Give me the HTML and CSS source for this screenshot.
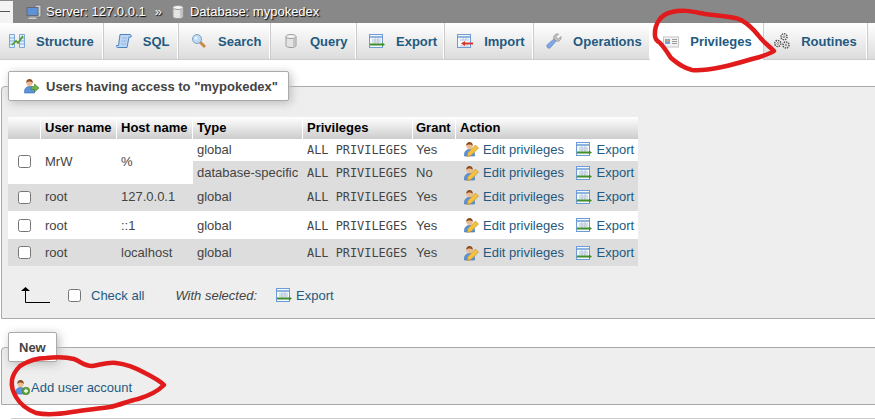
FILE: index.html
```html
<!DOCTYPE html>
<html>
   <head>
      <meta charset="utf-8">
      <title>mypokedex privileges</title>
      <link rel="stylesheet" href="styles.css">
   </head>
   <body>
      <!-- shared icons -->
      <svg class="defs" width="0" height="0">
         <symbol id="i-server" viewBox="0 0 16 16">
            <rect x="9" y="1" width="6" height="12" fill="#c9ced2" stroke="#777"/>
            <rect x="11" y="9" width="2" height="1" fill="#4a4"/>
            <rect x="1" y="3.5" width="11" height="8" fill="#5b93d6" stroke="#667"/>
            <rect x="4" y="12" width="5" height="1.5" fill="#999"/>
            <rect x="2.5" y="13.5" width="8" height="1.5" fill="#ccc"/>
         </symbol>
         <symbol id="i-db" viewBox="0 0 16 16">
            <path d="M3 3.5v9c0 1.5 2.500 2 5 2s5-.5 5-2v-9z" fill="#e4e4e4" stroke="#999"/>
            <ellipse cx="8" cy="3.500" rx="5" ry="2" fill="#f8f8f8" stroke="#999"/>
            <rect x="10" y="6" width="2" height="7" fill="#c4c4c4"/>
         </symbol>
         <symbol id="i-structure" viewBox="0 0 16 16">
            <path d="M.5 1.500h5v13h-5zM10.500 1.500h5v13h-5z" fill="#e6f0fa" stroke="#7aa7dc"/>
            <path d="M1 5h4M1 8h4M1 11h4M11 5h4M11 8h4M11 11h4" stroke="#7aa7dc"/>
            <path d="M3 12l4-4 2 2 5-7" fill="none" stroke="#4c9a2a" stroke-width="1.600"/>
         </symbol>
         <symbol id="i-sql" viewBox="0 0 16 16">
            <path d="M4 1.500h10c1 0 1.500 1 1 2.500h-2L11 14.500H1.500c-1 0-1.500-1-1-2h2z" fill="#bcd6f4" stroke="#4f82c3"/>
            <path d="M6 5h5M5.500 8h5M5 11h5" stroke="#8fb4e0"/>
         </symbol>
         <symbol id="i-search" viewBox="0 0 16 16">
            <path d="M9 9l5 5" stroke="#c98a4a" stroke-width="3"/>
            <circle cx="6" cy="6" r="4.500" fill="#bcd9f5" stroke="#7f9fbe"/>
            <circle cx="5" cy="5" r="1.500" fill="#eef6fd"/>
         </symbol>
         <symbol id="i-export" viewBox="0 0 16 16">
            <rect x=".5" y="1.500" width="13" height="13" fill="#f4f7fb" stroke="#6d9bd6"/>
            <path d="M1 4h12" stroke="#8fb4e0" stroke-width="2"/>
            <path d="M3 7h9M3 9h9M6 5v6M9 5v6" stroke="#b6c6d8"/>
            <path d="M1 11.500h12" stroke="#3e8e2a" stroke-width="2"/>
            <path d="M13 9.500l3 2-3 2z" fill="#3e8e2a"/>
         </symbol>
         <symbol id="i-import" viewBox="0 0 16 16">
            <rect x=".5" y="1.500" width="13" height="13" fill="#f4f7fb" stroke="#6d9bd6"/>
            <path d="M1 4h12" stroke="#8fb4e0" stroke-width="2"/>
            <path d="M3 7h9M3 13h9M6 5v2M9 5v2" stroke="#b6c6d8"/>
            <path d="M7 10.500h9" stroke="#d9362b" stroke-width="2"/>
            <path d="M8 8l-4 2.500 4 2.500z" fill="#d9362b"/>
         </symbol>
         <symbol id="i-wrench" viewBox="0 0 16 16">
            <path d="M1.500 14.500c-1-1-1-2 0-3L8 6l2 2-5.500 6.500c-1 1-2 1-3 0z" fill="#7ea8e4" stroke="#5b82bd" stroke-width=".7"/>
            <path d="M8 6c-1-3 1-5.500 4.500-5L10 3.500l.5 2 2 .5L15 3.500c.5 3.500-2 5.500-5 4.500z" fill="#c8c8c8" stroke="#888" stroke-width=".7"/>
         </symbol>
         <symbol id="i-card" viewBox="0 0 16 16">
            <rect x=".5" y="3" width="15" height="10" fill="#f3f3f3" stroke="#c4c4c4"/>
            <rect x="2" y="5" width="5" height="5" fill="#6ea5dc"/>
            <circle cx="4.500" cy="6.500" r="1.300" fill="#e8a25c"/>
            <path d="M9 5.500h5M9 7.500h5M9 9.500h5" stroke="#999"/>
         </symbol>
         <symbol id="i-gears" viewBox="0 0 16 16">
            <g fill="#fff" stroke="#555" stroke-width="1.500" stroke-dasharray="1.500 .8">
               <circle cx="10" cy="3.800" r="3"/>
               <circle cx="3.800" cy="10.500" r="3"/>
               <circle cx="12" cy="12" r="3"/>
            </g>
            <g fill="none" stroke="#666" stroke-width=".8">
               <circle cx="10" cy="3.800" r="1"/>
               <circle cx="3.800" cy="10.500" r="1"/>
               <circle cx="12" cy="12" r="1"/>
            </g>
         </symbol>
         <symbol id="i-person" viewBox="0 0 16 16">
            <path d="M1.500 15c-.5-4 1.500-6.500 5-6.500s5.500 2.500 5 6.500z" fill="#5b93dc" stroke="#3b6bb0" stroke-width=".6"/>
            <circle cx="6.500" cy="5" r="3" fill="#eeb98c"/>
            <path d="M3.300 5C3 2 5 1 6.500 1s3.700 1 3.200 4C9 3.500 7 3.500 6 3.500S4 4 3.300 5z" fill="#8a4f22"/>
         </symbol>
         <symbol id="i-user-edit" viewBox="0 0 16 16">
            <use href="#i-person"/>
            <path d="M4 15.500l1-4 7.500-7.500 3 3-7.500 7.500z" fill="#f1c33e" stroke="#b8862a" stroke-width=".6"/>
         </symbol>
         <symbol id="i-user-add" viewBox="0 0 16 16">
            <use href="#i-person"/>
            <circle cx="12" cy="12" r="3.800" fill="#5fa53a" stroke="#3f7d25" stroke-width=".6"/>
            <path d="M10 12h4M12 10v4" stroke="#fff" stroke-width="1.300"/>
         </symbol>
         <symbol id="i-user-go" viewBox="0 0 16 16">
            <use href="#i-person"/>
            <path d="M8 8.500h3.500V6l4.500 4-4.500 4v-2.500H8z" fill="#6fb04a" stroke="#3f7d25" stroke-width=".6"/>
         </symbol>
      </svg>

      <div class="topbar">
         <span class="collapse"><span class="collapse-arrow"></span></span>
         <svg class="icon crumb-icon"><use href="#i-server"/></svg>
         <span>Server: 127.0.0.1</span>
         <span class="crumb-sep">»</span>
         <svg class="icon crumb-icon"><use href="#i-db"/></svg>
         <span>Database: mypokedex</span>
      </div>

      <nav class="tabs">
         <a class="tab first"><svg class="icon"><use href="#i-structure"/></svg>Structure</a>
         <a class="tab"><svg class="icon"><use href="#i-sql"/></svg>SQL</a>
         <a class="tab"><svg class="icon"><use href="#i-search"/></svg>Search</a>
         <a class="tab"><svg class="icon"><use href="#i-db"/></svg>Query</a>
         <a class="tab export"><svg class="icon"><use href="#i-export"/></svg>Export</a>
         <a class="tab"><svg class="icon"><use href="#i-import"/></svg>Import</a>
         <a class="tab"><svg class="icon"><use href="#i-wrench"/></svg>Operations</a>
         <a class="tab active"><svg class="icon"><use href="#i-card"/></svg>Privileges</a>
         <a class="tab routines"><svg class="icon"><use href="#i-gears"/></svg>Routines</a>
      </nav>

      <fieldset class="panel users">
         <legend><svg class="icon"><use href="#i-user-go"/></svg>Users having access to "mypokedex"</legend>
         <table class="grid">
            <colgroup>
               <col class="c-check">
               <col class="c-user">
               <col class="c-host">
               <col class="c-type">
               <col class="c-priv">
               <col class="c-grant">
               <col class="c-action">
            </colgroup>
            <thead>
               <tr>
                  <th></th>
                  <th>User name</th>
                  <th>Host name</th>
                  <th>Type</th>
                  <th>Privileges</th>
                  <th class="grant">Grant</th>
                  <th>Action</th>
               </tr>
            </thead>
            <tbody>
               <tr class="light h22">
                  <td class="check" rowspan="2"><input type="checkbox"></td>
                  <td rowspan="2">MrW</td>
                  <td rowspan="2">%</td>
                  <td>global</td>
                  <td><code>ALL PRIVILEGES</code></td>
                  <td class="grant">Yes</td>
                  <td class="action">
                     <a><svg class="icon"><use href="#i-user-edit"/></svg>Edit privileges</a>
                     <a><svg class="icon"><use href="#i-export"/></svg>Export</a>
                  </td>
               </tr>
               <tr class="h23">
                  <td class="dark">database-specific</td>
                  <td class="dark"><code>ALL PRIVILEGES</code></td>
                  <td class="dark grant">No</td>
                  <td class="dark action">
                     <a><svg class="icon"><use href="#i-user-edit"/></svg>Edit privileges</a>
                     <a><svg class="icon"><use href="#i-export"/></svg>Export</a>
                  </td>
               </tr>
               <tr class="dark h27">
                  <td class="check"><input type="checkbox"></td>
                  <td>root</td>
                  <td>127.0.0.1</td>
                  <td>global</td>
                  <td><code>ALL PRIVILEGES</code></td>
                  <td class="grant">Yes</td>
                  <td class="action">
                     <a><svg class="icon"><use href="#i-user-edit"/></svg>Edit privileges</a>
                     <a><svg class="icon"><use href="#i-export"/></svg>Export</a>
                  </td>
               </tr>
               <tr class="light h28">
                  <td class="check"><input type="checkbox"></td>
                  <td>root</td>
                  <td>::1</td>
                  <td>global</td>
                  <td><code>ALL PRIVILEGES</code></td>
                  <td class="grant">Yes</td>
                  <td class="action">
                     <a><svg class="icon"><use href="#i-user-edit"/></svg>Edit privileges</a>
                     <a><svg class="icon"><use href="#i-export"/></svg>Export</a>
                  </td>
               </tr>
               <tr class="dark h27b">
                  <td class="check"><input type="checkbox"></td>
                  <td>root</td>
                  <td>localhost</td>
                  <td>global</td>
                  <td><code>ALL PRIVILEGES</code></td>
                  <td class="grant">Yes</td>
                  <td class="action">
                     <a><svg class="icon"><use href="#i-user-edit"/></svg>Edit privileges</a>
                     <a><svg class="icon"><use href="#i-export"/></svg>Export</a>
                  </td>
               </tr>
            </tbody>
         </table>
         <div class="bulk">
            <svg class="bulk-arrow" width="30" height="16" viewBox="0 0 30 16">
               <path d="M4.500 3v12.500H29" fill="none" stroke="#000"/>
               <path d="M4.500 0L9 4H0z" fill="#000"/>
            </svg>
            <label class="check-all"><input type="checkbox">Check all</label>
            <i class="with-selected">With selected:</i>
            <a class="bulk-export"><svg class="icon"><use href="#i-export"/></svg>Export</a>
         </div>
      </fieldset>

      <fieldset class="panel new">
         <legend>New</legend>
         <a class="add-user"><svg class="icon"><use href="#i-user-add"/></svg>Add user account</a>
      </fieldset>

      <hr class="rule">

      <!-- red marker drawn over the screenshot -->
      <svg class="marker" width="875" height="420" viewBox="0 0 875 420">
         <path d="M655 36C654 24 661 14 672 12C684 9 694 12 705 14C718 16 733 16 741 20C750 25 754 30 758 35C763 42 769 46 774 51C768 55 760 57 752 59C742 62 731 65 722 67C712 69 700 71 692 70C683 68 677 63 671 58C667 52 664 47 660 43C657 41 655 39 655 36z"/>
         <path d="M20 366C28 361 36 358 46 358C56 357 66 357 74 359C80 361 84 366 92 366C100 365 107 362 116 363C126 364 136 368 145 373C153 377 160 381 164 385C157 392 148 396 138 399C128 401 120 405 110 407C96 409 84 410 72 412C60 414 46 415 36 413C26 409 20 404 16 397C13 391 11 387 12 380C13 374 16 370 20 366z"/>
      </svg>
   </body>
</html>
```

FILE: styles.css
```css
html, body {
   margin : 0;
   height : 420px;
   overflow : hidden;
}

body {
   position : relative;
   width : 875px;
   background : #fff;
   color : #444;
   font-family : "Liberation Sans", Arial, sans-serif;
   font-size : 13px;
}

a {
   color : #235a81;
}

.defs {
   position : absolute;
}

.icon {
   width : 16px;
   height : 16px;
   flex : none;
}

/* breadcrumb */

.topbar {
   display : flex;
   align-items : center;
   height : 23px;
   background : #888;
   color : #fff;
   text-shadow : 1px 1px 1px #000;
}

.collapse {
   display : flex;
   align-items : center;
   width : 13px;
   height : 22px;
   margin-right : 13px;
   background : #f3f3f3;
}

.collapse-arrow {
   width : 10px;
   border-top : 1px solid #555;
}

.crumb-icon {
   margin-right : 4px;
}

.crumb-sep {
   margin : 0 8px 0 9px;
}

/* tabs */

.tabs {
   display : flex;
   height : 36px;
   background : linear-gradient(#fff, #dcdcdc);
   border-bottom : 1px solid #ccc;
}

.tab {
   display : flex;
   align-items : center;
   gap : 11px;
   padding : 0 7.5px 0 13px;
   font-weight : bold;
   border-right : 1px solid #fff;
   box-shadow : 1px 0 0 #ccc;
}

.tab.first {
   padding : 0 8px 0 9px;
}

.tab.export {
   padding-right : 6px;
}

.tab.routines {
   padding : 0 9px 0 11px;
}

.tab.active {
   background : #fff;
   margin-bottom : -1px;
   padding-right : 10.5px;
}

/* panels */

.panel {
   margin : 0 -20px 0 1px;
   padding : 16px 6px 0;
   min-width : 0;
   background : #eee;
   border : 1px solid #aaa;
   border-radius : 4px 0 0 0;
}

.users {
   margin-top : 11px;
   height : 230px;
}

.new {
   margin-top : 13px;
   padding-top : 0;
   height : 71px;
}

legend {
   display : flex;
   align-items : center;
   gap : 7px;
   box-sizing : border-box;
   height : 30px;
   padding : 0 10px 0 14px;
   background : #fff;
   border : 1px solid #aaa;
   border-radius : 2px;
   box-shadow : 2px 2px 10px #bbb;
   font-weight : bold;
}

.new legend {
   padding : 0 10px;
}

/* users table */

.grid {
   table-layout : fixed;
   width : 630px;
   border-collapse : separate;
   border-spacing : 0;
}

.c-check { width : 33px; }
.c-user { width : 76px; }
.c-host { width : 76px; }
.c-type { width : 110px; }
.c-priv { width : 110px; }
.c-grant { width : 43px; }
.c-action { width : 182px; }

th {
   height : 20px;
   padding : 0 0 2px 4px;
   background : linear-gradient(#fff, #ccc);
   border-right : 1px solid #fff;
   color : #000;
   text-align : left;
   white-space : nowrap;
}

th:last-child {
   border-right : 0;
}

td {
   padding : 0 0 0 4px;
   white-space : nowrap;
}

th.grant,
td.grant {
   padding-left : 3px;
}

.light td,
.light {
   background : #fff;
}

.dark td,
td.dark {
   background : #ddd;
}

.h22 td { height : 20px; padding-bottom : 2px; }
.h23 td { height : 23px; }
.h27 td { height : 25px; padding-bottom : 2px; }
.h28 td { height : 28px; }
.h27b td { height : 27px; }

td[rowspan] {
   background : #fff;
   padding-bottom : 0;
}

td.check {
   padding : 0 0 0 10px;
}

input[type=checkbox] {
   display : block;
   width : 13px;
   height : 13px;
   margin : 0;
}

code {
   font-family : "DejaVu Sans Mono", monospace;
   font-size : 11.9px;
}

td.action {
   padding-left : 7px;
}

.action a {
   display : inline-flex;
   align-items : center;
   gap : 4px;
   vertical-align : middle;
}

.action a + a {
   margin-left : 8px;
   gap : 5px;
}

/* below the table */

.bulk {
   display : flex;
   align-items : center;
   height : 30px;
   margin-top : 14px;
   padding-left : 13px;
}

.check-all {
   display : flex;
   align-items : center;
   gap : 10px;
   margin-left : 17px;
   color : #235a81;
}

.with-selected {
   margin-left : 31px;
}

.bulk-export {
   display : flex;
   align-items : center;
   gap : 4px;
   margin-left : 19px;
}

.add-user {
   display : flex;
   align-items : center;
   gap : 1px;
   margin : 17px 0 0 6px;
}

.rule {
   margin : 13px 0 0 11px;
   border : 0;
   border-top : 1px solid #ccc;
}

/* marker */

.marker {
   position : absolute;
   left : 0;
   top : 0;
   pointer-events : none;
}

.marker path {
   fill : none;
   stroke : #e11b1b;
   stroke-width : 4.5px;
   stroke-linejoin : round;
}
```
